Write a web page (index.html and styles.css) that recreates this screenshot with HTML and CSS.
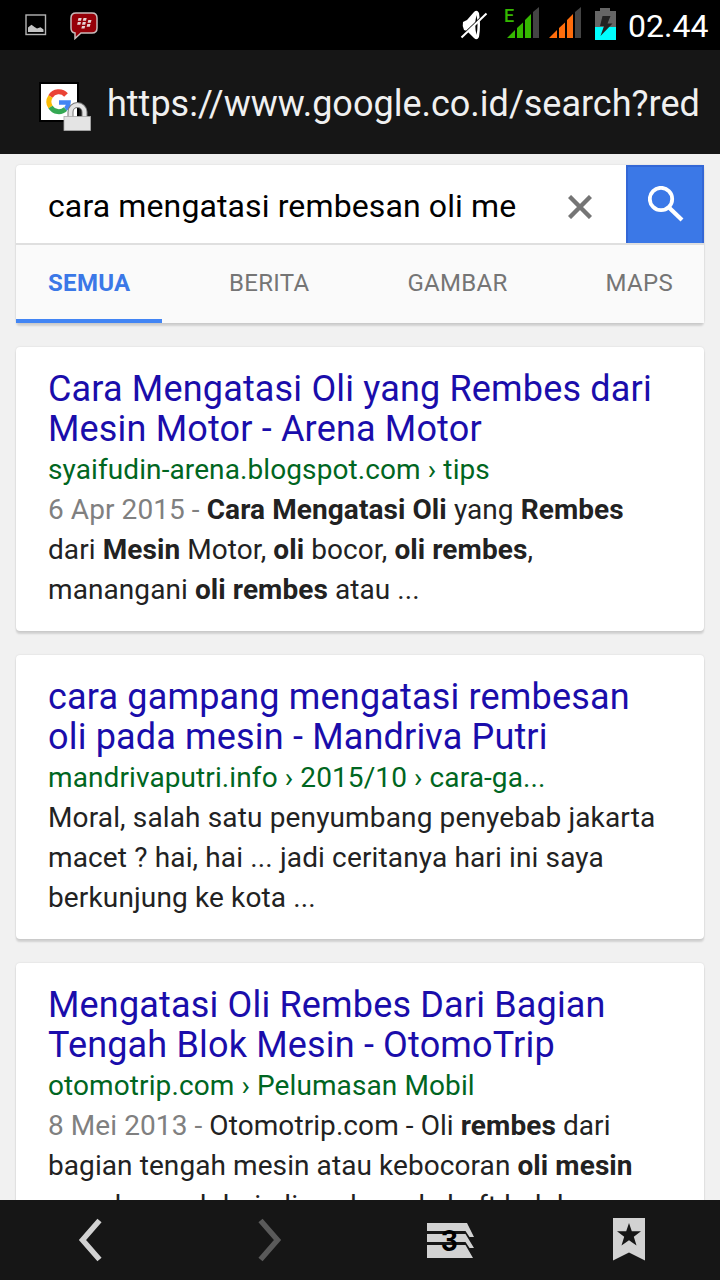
FILE: index.html
```
<!DOCTYPE html>
<html lang="id">
<head>
    <meta charset="UTF-8">
    <meta name="viewport" content="width=device-width, initial-scale=1.0">
    <title>cara mengatasi rembesan oli mesin</title>
    <link rel="stylesheet" href="styles.css">
</head>
<body>
    <div class="status-bar">
        <svg class="icon-image" width="22" height="22" viewBox="0 0 22 22">
            <rect x="1" y="1" width="19.500" height="19.500" fill="#000" stroke="#b4b4b4" stroke-width="1.400"/>
            <path d="M3 18v-4.500l3.500-2.800 3 2.300 2.500 1.500 3.500-1.200L18.500 15.500V18z" fill="#c4c4c4"/>
        </svg>
        <svg class="icon-bbm" width="28" height="28" viewBox="0 0 28 28">
            <path d="M6 1h16q5 0 5 5v10q0 5-5 5H11l-6 5.500V21q-4-.5-4-5V6q0-5 5-5z" fill="#960008" stroke="#c9bcbc" stroke-width="1.500"/>
            <path d="M8.500 6h3.200l-.7 2.700H7.800zM13.500 6h3.200l-.7 2.700h-3.200zM7.800 10h3.200l-.7 2.700H7.100zM12.700 10h3.200l-.7 2.700H12zM18.300 8h3.200l-.7 2.700h-3.200zM17.300 12h3.200l-.7 2.700h-3.200zM12 14h3.200l-.7 2.500h-3.200z" fill="#e6d4d4"/>
        </svg>
        <div class="status-right">
            <svg class="icon-mute" width="28" height="34" viewBox="0 0 28 34">
                <path d="M3 14l4-2 7-8q3-3 5 1 2 12 0 24-2 4-5 1l-7-7-3-1q-2-4-1-8z" fill="#fff"/>
                <path d="M16.500 7q-2.500 10 0 20 2-10 0-20z" fill="#000"/>
                <path d="M1.500 28.500L26.500 4.500" stroke="#000" stroke-width="2"/>
                <path d="M1.500 29.500L26.500 5.500" stroke="#fff" stroke-width="2"/>
            </svg>
            <svg class="icon-signal" width="38" height="38" viewBox="0 0 38 38">
                <text x="3" y="21.500" class="net-type">E</text>
                <path d="M6 38l8-8v8zM16 38V28l6-5.500V38zM24 38V20l6-6v24z" fill="#35b800"/>
                <path d="M32 38V12l6-5v31z" fill="#444"/>
            </svg>
            <svg class="icon-signal second" width="32" height="38" viewBox="0 0 32 38">
                <path d="M0 38l8-8v8zM10 38V28l6-5.500V38zM18 38V20l6-6v24z" fill="#ff6d0c"/>
                <path d="M26 38V12l6-5v31z" fill="#444"/>
            </svg>
            <svg class="icon-battery" width="21" height="32" viewBox="0 0 21 32">
                <path d="M0 3h5V0h10v3h6v16H0z" fill="#666"/>
                <path d="M0 19h21v13H0z" fill="#0ff"/>
                <path d="M7.500 8h8l-3 7.500h5L5.500 28l3.500-10H5z" fill="#222"/>
            </svg>
            <span class="clock">02.44</span>
        </div>
    </div>

    <div class="url-bar">
        <svg class="favicon" width="52" height="50" viewBox="0 0 52 50">
            <rect x="0" y="0" width="40" height="40" fill="#000"/>
            <rect x="2" y="2" width="36" height="36" fill="#fff"/>
            <g fill="none" stroke-width="5">
                <path d="M11.500 14.500A9.700 9.700 0 0 1 27 13" stroke="#ea4335"/>
                <path d="M11.500 14.500a9.700 9.700 0 0 0 0 10.500" stroke="#fbbc05"/>
                <path d="M11.500 25A9.700 9.700 0 0 0 26.500 27" stroke="#34a853"/>
                <path d="M20 20.500h9.500Q29.300 25 26.500 27" stroke="#4285f4" stroke-width="4.500"/>
            </g>
            <path d="M31.500 35v-5a7 7 0 0 1 14 0v5" fill="none" stroke="#777" stroke-width="6"/>
            <path d="M31.500 35v-5a7 7 0 0 1 14 0v5" fill="none" stroke="#e4e4e4" stroke-width="4"/>
            <rect x="25" y="34.500" width="26.500" height="14" fill="#e4e4e4" stroke="#aaa" stroke-width=".8"/>
        </svg>
        <span class="url">https://www.google.co.id/search?red</span>
    </div>

    <div class="page">
        <div class="search-card">
            <div class="search-row">
                <div class="query">cara mengatasi rembesan oli me</div>
                <svg class="clear" width="24" height="24" viewBox="0 0 24 24">
                    <path d="M1.500 1.500l21 21M22.500 1.500l-21 21" stroke="#757575" stroke-width="4.400"/>
                </svg>
                <div class="search-btn">
                    <svg width="36" height="36" viewBox="0 0 36 36" fill="none" stroke="#fff">
                        <circle cx="13" cy="13" r="11.200" stroke-width="3.800"/>
                        <path d="M21.500 22l12.500 12" stroke-width="4.200"/>
                    </svg>
                </div>
            </div>
            <div class="tabs">
                <span class="tab active">SEMUA</span>
                <span class="tab">BERITA</span>
                <span class="tab">GAMBAR</span>
                <span class="tab">MAPS</span>
            </div>
        </div>

        <div class="result">
            <div class="title">Cara Mengatasi Oli yang Rembes dari<br>Mesin Motor - Arena Motor</div>
            <div class="link">syaifudin-arena.blogspot.com › tips</div>
            <div class="snippet"><span class="date">6 Apr 2015 - </span><b>Cara Mengatasi Oli</b> yang <b>Rembes</b><br>dari <b>Mesin</b> Motor, <b>oli</b> bocor, <b>oli rembes</b>,<br>manangani <b>oli rembes</b> atau ...</div>
        </div>

        <div class="result">
            <div class="title">cara gampang mengatasi rembesan<br>oli pada mesin - Mandriva Putri</div>
            <div class="link">mandrivaputri.info › 2015/10 › cara-ga...</div>
            <div class="snippet plain">Moral, salah satu penyumbang penyebab jakarta<br>macet ? hai, hai ... jadi ceritanya hari ini saya<br>berkunjung ke kota ...</div>
        </div>

        <div class="result">
            <div class="title">Mengatasi Oli Rembes Dari Bagian<br>Tengah Blok Mesin - OtomoTrip</div>
            <div class="link">otomotrip.com › Pelumasan Mobil</div>
            <div class="snippet"><span class="date">8 Mei 2013 - </span>Otomotrip.com - Oli <b>rembes</b> dari<br>bagian tengah mesin atau kebocoran <b>oli mesin</b><br>yang berasal dari oli seal crankshaft belakang</div>
        </div>
    </div>

    <div class="nav-bar">
        <div class="nav-item">
            <svg width="24" height="44" viewBox="0 0 24 44"><path d="M21.500 2.500L4.500 22l17 19.500" fill="none" stroke="#d2d2d2" stroke-width="5.500"/></svg>
        </div>
        <div class="nav-item">
            <svg width="24" height="44" viewBox="0 0 24 44"><path d="M2.500 2.500L19.500 22l-17 19.500" fill="none" stroke="#5a5a5a" stroke-width="5.500"/></svg>
        </div>
        <div class="nav-item">
            <svg width="48" height="36" viewBox="0 0 48 36">
                <path d="M1 1h40l7 14h-4.500l-4-6H1zM1 12h38.500l8.500 14h-4.500l-4-6H1zM1 23h38.500l7.500 13H1z" fill="#d2d2d2"/>
                <text x="23.500" y="28.500" text-anchor="middle" class="tab-count">3</text>
            </svg>
        </div>
        <div class="nav-item">
            <svg width="34" height="44" viewBox="0 0 34 44">
                <path d="M0 0h32v42.500l-16-8L0 42.500z" fill="#d2d2d2"/>
                <path d="M16 5l2.800 8.300H28l-7.200 5.400 2.700 8.800-7.500-5.200-7.500 5.200 2.700-8.800L4 13.300h9.200z" fill="#161616"/>
            </svg>
        </div>
    </div>
</body>
</html>
```
FILE: styles.css
```
body {
    margin: 0;
    width: 720px;
    height: 1280px;
    overflow: hidden;
    display: flex;
    flex-direction: column;
    font-family: Roboto, "Noto Sans", sans-serif;
    background-color: #f1f1f1;
}
svg {
    display: block;
    flex: none;
}
.status-bar {
    height: 50px;
    flex: none;
    display: flex;
    background-color: #000;
    box-sizing: border-box;
    padding: 0 12px 0 25px;
}
.icon-image {
    margin-top: 14px;
}
.icon-bbm {
    margin: 12px 0 0 23px;
}
.status-right {
    margin-left: auto;
    display: flex;
}
.icon-mute {
    margin: 8px 13px 0 0;
}
.icon-signal {
    margin-right: 10px;
}
.icon-signal.second {
    margin-right: 14px;
}
.icon-battery {
    margin: 8px 12px 0 0;
}
.net-type {
    font: 500 18px Roboto, sans-serif;
    fill: #35b800;
}
.tab-count {
    font: bold 29px Roboto, sans-serif;
    fill: #000;
}
.clock {
    width: 80px;
    font-size: 32px;
    line-height: 52px;
    color: #fff;
}
.url-bar {
    height: 104px;
    flex: none;
    display: flex;
    background-color: #161616;
    box-sizing: border-box;
    padding-left: 39px;
}
.favicon {
    margin-top: 32px;
}
.url {
    margin-left: 16px;
    font-size: 36px;
    line-height: 109px;
    color: #f0f0f0;
    white-space: nowrap;
}
.page {
    flex: 1;
    min-height: 0;
    overflow: hidden;
    padding: 11px 16px 0;
}
.search-card, .result {
    background-color: #fff;
    border-radius: 4px;
    box-shadow: 0 3px 2px rgba(0, 0, 0, 0.13), 0 0 2px rgba(0, 0, 0, 0.13);
}
.search-card {
    height: 158px;
    margin-bottom: 24px;
}
.search-row {
    height: 78px;
    display: flex;
    align-items: center;
    border-bottom: 2px solid #dfdfdf;
}
.query {
    flex: 1;
    padding-left: 32px;
    font-size: 32px;
    line-height: 78px;
    letter-spacing: 0.12px;
    padding-top: 3px;
    color: #000;
    white-space: nowrap;
}
.clear {
    margin: 6px 34px 0 0;
}
.search-btn {
    width: 78px;
    height: 78px;
    box-sizing: border-box;
    border: 2px solid #3367d6;
    border-bottom: 0;
    padding: 19px 0 0 20px;
    background-color: #3b78e7;
}
.tabs {
    height: 78px;
    display: flex;
    justify-content: space-between;
    background-color: #fafafa;
}
.tab {
    padding: 0 31px 0 32px;
    font-size: 24px;
    line-height: 76px;
    letter-spacing: 0.3px;
    color: #757575;
}
.tab.active {
    box-sizing: border-box;
    width: 146px;
    height: 78px;
    border-bottom: 4px solid #4285f4;
    font-weight: bold;
    color: #3b78e7;
}
.result {
    height: 284px;
    box-sizing: border-box;
    padding: 22px 0 0 32px;
    margin-bottom: 24px;
    white-space: nowrap;
}
.title {
    font-size: 36px;
    line-height: 40px;
    letter-spacing: 0.17px;
    margin-bottom: 1px;
    color: #1a0dab;
}
.link {
    font-size: 28px;
    line-height: 40px;
    letter-spacing: 0.1px;
    color: #006621;
}
.snippet {
    font-size: 28px;
    line-height: 40px;
    letter-spacing: 0.08px;
    color: #222;
}
.snippet.plain {
    letter-spacing: 0.14px;
}
.date {
    color: #808080;
}
.nav-bar {
    height: 80px;
    flex: none;
    display: flex;
    background-color: #161616;
}
.nav-item {
    flex: 1;
    display: flex;
    align-items: center;
    justify-content: center;
}
```
